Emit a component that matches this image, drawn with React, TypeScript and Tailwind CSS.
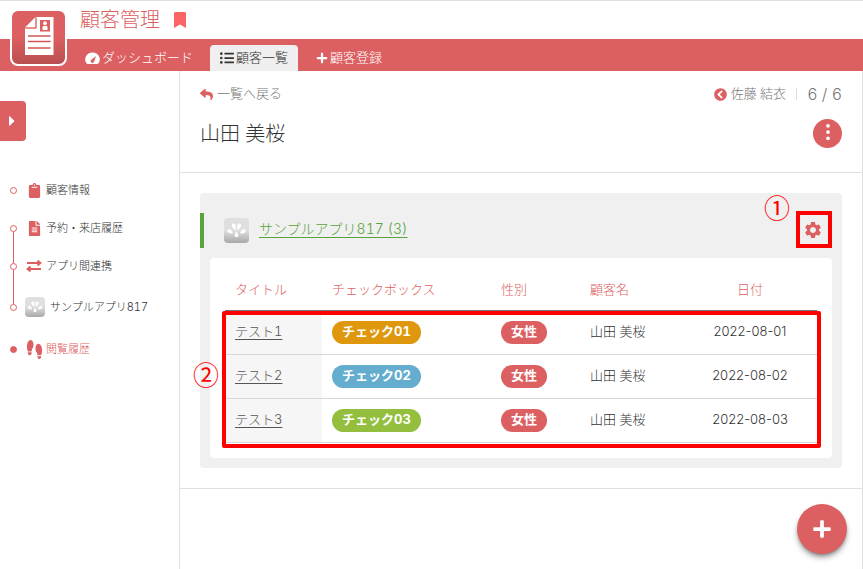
import type { ReactNode } from 'react';
import { BsThreeDotsVertical } from 'react-icons/bs';
import {
  FaBookmark,
  FaCaretRight,
  FaChevronCircleLeft,
  FaClipboard,
  FaFileAlt,
  FaListUl,
  FaPlus,
  FaReply,
  FaShoePrints,
} from 'react-icons/fa';
import { MdSettings } from 'react-icons/md';
import { clsx } from 'clsx';

interface Visit {
  title: string;
  check: string;
  checkColor: string;
  gender: string;
  customer: string;
  date: string;
}

const visits: Visit[] = [
  { title: 'テスト1', check: 'チェック01', checkColor: 'bg-[#df980d]', gender: '女性', customer: '山田 美桜', date: '2022-08-01' },
  { title: 'テスト2', check: 'チェック02', checkColor: 'bg-[#64adce]', gender: '女性', customer: '山田 美桜', date: '2022-08-02' },
  { title: 'テスト3', check: 'チェック03', checkColor: 'bg-[#94bf3e]', gender: '女性', customer: '山田 美桜', date: '2022-08-03' },
];

const LogoIcon = () => (
  <svg viewBox="0 0 30 40" className="h-10 w-[30px]" aria-hidden="true">
    <path d="M12.500 1H29.500V39H1V12.500H12.500Z" fill="#fff" />
    <path d="M11.500 1V11.500H1Z" fill="#fff" />
    <path d="M12 2V12H2" fill="none" stroke="#dc5f61" strokeWidth="0.800" />
    <path d="M16 4H26V15.500H16Z" fill="#dc5f61" />
    <circle cx="21" cy="7.200" r="1.900" fill="#fff" />
    <path d="M18.500 14V11Q18.500 9.800 21 9.800T23.500 11V14Z" fill="#fff" />
    <path d="M4 20H26.500M4 25.500H26.500M4 32H26.500" stroke="#d15557" strokeWidth="1.300" />
  </svg>
);

const GaugeIcon = () => (
  <svg viewBox="0 0 16 14" className="h-[13px] w-[15px]" aria-hidden="true">
    <path d="M8 0.500A7.500 7.500 0 0 1 14.500 12.200Q14 13 13 13H3Q2 13 1.500 12.200A7.500 7.500 0 0 1 8 0.500Z" fill="#fff" />
    <path d="M11.800 4.200L9.700 10.200A1.900 1.900 0 1 1 6.700 8.300Z" fill="#dc5f61" />
  </svg>
);

const SwapIcon = () => (
  <svg viewBox="0 0 16 12" className="h-3 w-4" fill="none" stroke="currentColor" strokeWidth="1.800" aria-hidden="true">
    <path d="M1 3H14M11.500 0.500L14.500 3L11.500 5.500" />
    <path d="M15 9H2M4.500 6.500L1.500 9L4.500 11.500" />
  </svg>
);

const AppIcon = ({ className }: { className?: string }) => (
  <span className={clsx('block shrink-0 rounded bg-linear-to-b from-[#dfdfdf] from-50% to-[#a8a8a8]', className)}>
    <svg viewBox="0 0 25 25" className="size-full" fill="#fff" aria-hidden="true">
      <path d="M11.600 12C9.500 11 7.800 9 7.800 7.200A1.900 1.900 0 0 1 11.400 6.600C12 8.400 12 10 11.600 12Z" />
      <path d="M13.400 12C15.500 11 17.200 9 17.200 7.200A1.900 1.900 0 0 0 13.600 6.600C13 8.400 13 10 13.400 12Z" />
      <path d="M9 15.300C8.300 13 6.800 11.200 5.200 11.200A1.800 1.800 0 0 0 4.200 14.500C5.600 15.500 7.300 15.700 9 15.300Z" />
      <path d="M16 15.300C16.700 13 18.200 11.200 19.800 11.200A1.800 1.800 0 0 1 20.800 14.500C19.400 15.500 17.700 15.700 16 15.300Z" />
      <path d="M12.500 13.500C13.600 15 14.400 16.200 14.400 17.300A1.900 1.900 0 0 1 10.600 17.300C10.600 16.200 11.400 15 12.500 13.500Z" />
    </svg>
  </span>
);

interface SideItemProps {
  icon: ReactNode;
  label: string;
  active?: boolean;
  lineUp?: boolean;
  lineDown?: boolean;
  isApp?: boolean;
}

const SideItem = ({ icon, label, active, lineUp, lineDown, isApp }: SideItemProps) => (
  <li className={clsx('flex', isApp ? 'h-11' : active ? 'h-10' : 'h-[38px]')}>
    <a href="#" className={clsx('flex items-stretch text-[11px]', active ? 'text-[#dc5f61]' : 'text-[#333]')}>
      <span className="flex w-[7px] flex-col items-center">
        <span className={clsx('w-px flex-1', lineUp && 'bg-[#dc5f61]')} />
        <span className={clsx('size-[7px] rounded-full border border-[#dc5f61]', active && 'bg-[#dc5f61]')} />
        <span className={clsx('w-px flex-1', lineDown && 'bg-[#dc5f61]')} />
      </span>
      <span className={clsx('ml-[7px] flex items-center justify-center text-[#dc5f61]', isApp ? 'w-[22px]' : 'w-5')}>{icon}</span>
      <span className={clsx('flex items-center', isApp ? 'ml-1' : 'ml-0.5')}>{label}</span>
    </a>
  </li>
);

const Badge = ({ color, children }: { color: string; children: ReactNode }) => (
  <span className={clsx('inline-flex h-[23px] items-center rounded-full px-2.5 align-middle font-bold text-white', color)}>
    {children}
  </span>
);

const Marker = ({ className, children }: { className: string; children: ReactNode }) => (
  <span className={clsx("absolute font-['Noto_Sans_CJK_JP',sans-serif] text-[26px] leading-8 font-normal text-[#ff0000]", className)}>
    {children}
  </span>
);

export default function App() {
  return (
    <div className="flex min-h-screen flex-col bg-white font-['Inter','Noto_Sans_CJK_JP',sans-serif] text-[13px] font-light text-[#333] tabular-nums">
      <header className="relative border-t border-[#e0e0e0]">
        <div className="flex h-[38px] items-center gap-3 pl-20 text-[#dc5f61]">
          <h1 className="text-xl font-light">顧客管理</h1>
          <FaBookmark className="size-4 text-[#f96464]" />
        </div>
        <nav className="flex h-8 items-end bg-[#dc5f61] pl-[75px] text-white">
          <a href="#" className="flex h-[26px] items-center gap-0.5 pr-2.5 pl-2.5">
            <GaugeIcon />
            ダッシュボード
          </a>
          <a href="#" className="ml-[7px] flex h-[26px] items-center gap-0.5 rounded-t bg-[#eeefee] px-2.5 text-[#333]">
            <FaListUl className="size-3.5" />
            顧客一覧
          </a>
          <a href="#" className="ml-2 flex h-[26px] items-center gap-0.5 px-2.5">
            <FaPlus className="size-3" />
            顧客登録
          </a>
        </nav>
        <a
          href="#"
          aria-label="ホーム"
          className="absolute top-2 left-2.5 flex h-[57px] w-[57px] items-center justify-center rounded-lg border-2 border-white bg-linear-to-b from-[#dc5f61] from-50% to-[#b94f51] pb-1"
        >
          <LogoIcon />
        </a>
      </header>

      <div className="flex flex-1">
        <aside className="w-[180px] shrink-0 border-r border-[#e0e0e0] pt-[30px]">
          <button type="button" aria-label="メニューを開く" className="flex h-10 w-[26px] items-center justify-center rounded-r bg-[#dc5f61] pr-0.5 text-white">
            <FaCaretRight className="size-4" />
          </button>
          <ul className="mt-[30px] pl-2.5">
            <SideItem icon={<FaClipboard className="size-[15px]" />} label="顧客情報" />
            <SideItem icon={<FaFileAlt className="size-[15px]" />} label="予約・来店履歴" lineDown />
            <SideItem icon={<SwapIcon />} label="アプリ間連携" lineUp lineDown />
            <SideItem icon={<AppIcon className="size-5" />} label="サンプルアプリ817" lineUp isApp />
            <SideItem icon={<FaShoePrints className="size-[19px] -rotate-90" />} label="閲覧履歴" active />
          </ul>
        </aside>

        <main className="min-w-0 flex-1 border-r border-[#e0e0e0]">
          <section className="border-b border-[#e0e0e0] px-5 pt-3 pb-6">
            <div className="flex h-[22px] items-center justify-between text-[#777]">
              <a href="#" className="flex items-center gap-1">
                <FaReply className="size-[13px] text-[#dc5f61]" />
                一覧へ戻る
              </a>
              <div className="flex items-center">
                <a href="#" className="flex items-center gap-1">
                  <FaChevronCircleLeft className="size-[13px] text-[#dc5f61]" />
                  佐藤 結衣
                </a>
                <span className="ml-2.5 border-l border-[#ddd] pl-2.5 text-base leading-3">6 / 6</span>
              </div>
            </div>
            <div className="mt-3.5 flex items-center justify-between">
              <h2 className="text-xl font-light">山田 美桜</h2>
              <button type="button" aria-label="操作" className="flex size-[29px] items-center justify-center rounded-full bg-[#dc5f61] pb-1 text-white">
                <BsThreeDotsVertical className="size-5" />
              </button>
            </div>
          </section>

          <section className="border-b border-[#e0e0e0] p-5">
            <div className="rounded bg-[#f0f0f0] pt-5 pb-2.5">
              <div className="flex h-[35px] items-center border-l-4 border-[#58a33b] pl-5">
                <AppIcon className="size-[25px]" />
                <a href="#" className="ml-2.5 pb-1 text-sm text-[#58a33b] underline underline-offset-3">サンプルアプリ817 (3)</a>
                <span className="relative mr-2.5 mb-0.5 ml-auto">
                  <button type="button" aria-label="設定" className="flex h-[37px] w-9 items-center justify-center border-4 border-[#ff0000] pr-0.5 text-[#dc5f61]">
                    <MdSettings className="size-5" />
                  </button>
                  <Marker className="-top-5 -left-8">①</Marker>
                </span>
              </div>

              <div className="mx-2.5 mt-2.5 rounded bg-white px-[15px] pt-3 pb-[15px]">
                <div className="relative">
                  <table className="w-full table-fixed text-left">
                    <thead>
                      <tr className="h-10 border-b border-[#777] text-[#dc5f61]">
                        <th className="w-[97px] px-2.5 font-light">タイトル</th>
                        <th className="w-[169px] px-2.5 font-light">チェックボックス</th>
                        <th className="w-[89px] px-2.5 font-light">性別</th>
                        <th className="w-[103px] px-2.5 font-light">顧客名</th>
                        <th className="px-2.5 text-center font-light">日付</th>
                      </tr>
                    </thead>
                    <tbody>
                      {visits.map((visit) => (
                        <tr key={visit.title} className="h-11 border-b border-[#d8d8d8]">
                          <td className="bg-[#f6f6f6] px-2.5">
                            <a href="#" className="text-[#555] underline underline-offset-3">{visit.title}</a>
                          </td>
                          <td className="px-2.5">
                            <Badge color={visit.checkColor}>{visit.check}</Badge>
                          </td>
                          <td className="px-2.5">
                            <Badge color="bg-[#dc5f61]">{visit.gender}</Badge>
                          </td>
                          <td className="px-2.5">{visit.customer}</td>
                          <td className="px-2.5 text-center normal-nums">{visit.date}</td>
                        </tr>
                      ))}
                    </tbody>
                  </table>
                  <div className="pointer-events-none absolute top-[41px] -right-1 -bottom-[5px] -left-[3px] rounded-xs border-4 border-[#ff0000]" />
                  <Marker className="top-[88px] -left-8">②</Marker>
                </div>
              </div>
            </div>
          </section>
        </main>
      </div>

      <button
        type="button"
        aria-label="追加"
        className="fixed right-4 bottom-[15px] flex size-[50px] items-center justify-center rounded-full bg-[#dc5f61] text-white shadow-md shadow-black/40"
      >
        <FaPlus className="size-5" />
      </button>
    </div>
  );
}
